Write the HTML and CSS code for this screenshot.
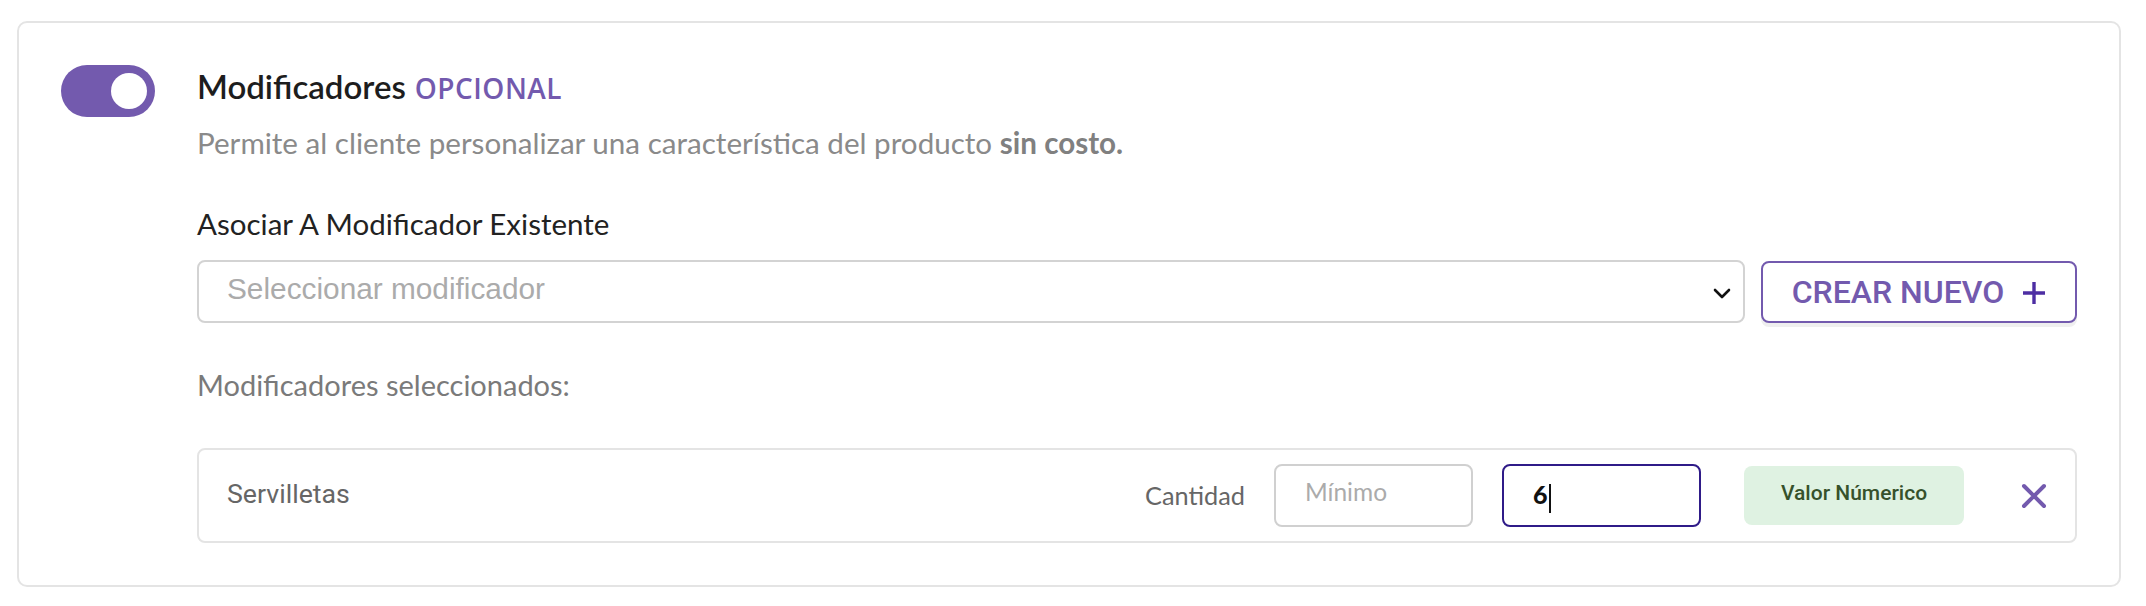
FILE: index.html
```html
<!DOCTYPE html>
<html lang="es">
<head>
<meta charset="utf-8">
<title>Modificadores</title>
<link rel="stylesheet" href="styles.css">
</head>
<body>
<div class="page">
  <section class="card">
    <div class="toggle" role="switch" aria-checked="true"><span class="knob"></span></div>
    <div class="content">
      <h2 class="title">Modificadores<span class="optional">OPCIONAL</span></h2>
      <p class="desc">Permite al cliente personalizar una característica del producto <b>sin costo.</b></p>
      <p class="label">Asociar A Modificador Existente</p>
      <div class="select-row">
        <div class="select">
          <span class="placeholder">Seleccionar modificador</span>
          <svg class="chevron" width="18" height="11" viewBox="0 0 18 11" aria-hidden="true"><path d="M2 2l7 7 7-7" fill="none" stroke="#111" stroke-width="2.6" stroke-linecap="round" stroke-linejoin="round"/></svg>
        </div>
        <button class="btn" type="button">
          <span>CREAR NUEVO</span>
          <svg class="plus" width="24" height="24" viewBox="0 0 24 24" aria-hidden="true"><path d="M12 1v22M1 12h22" fill="none" stroke="#4d2ea3" stroke-width="3.4"/></svg>
        </button>
      </div>
      <p class="selected-label">Modificadores seleccionados:</p>
      <div class="item">
        <span class="item-name">Servilletas</span>
        <span class="qty-label">Cantidad</span>
        <div class="field"><span class="ph">Mínimo</span></div>
        <div class="field active"><span class="val">6</span><span class="caret"></span></div>
        <span class="badge">Valor Númerico</span>
        <svg class="remove" width="26" height="26" viewBox="0 0 26 26" aria-hidden="true"><path d="M3 3l20 20M23 3L3 23" fill="none" stroke="#735aae" stroke-width="4" stroke-linecap="round"/></svg>
      </div>
    </div>
  </section>
</div>
</body>
</html>
```
FILE: styles.css
```css
html, body {
  margin: 0;
  background: #ffffff;
}
.page {
  padding: 21px 25px 19px 17px;
}
.card {
  border: 2px solid #e4e4e4;
  border-radius: 10px;
  padding: 42px;
  display: flex;
  align-items: flex-start;
  gap: 42px;
}
.toggle {
  flex: none;
  width: 94px;
  height: 52px;
  box-sizing: border-box;
  padding: 8px;
  border-radius: 26px;
  background: #735aae;
  display: flex;
  justify-content: flex-end;
}
.knob {
  width: 36px;
  height: 36px;
  border-radius: 50%;
  background: #ffffff;
}
.content {
  flex: 1;
  min-width: 0;
}
.title {
  margin: 0;
  height: 42px;
  font: 600 33px/42px "Lato", sans-serif;
  color: #1d1d1d;
  white-space: nowrap;
}
.optional {
  margin-left: 9px;
  font: 600 28px "Open Sans", sans-serif;
  letter-spacing: 0.5px;
  color: #735aae;
}
.desc {
  margin: 16px 0 0;
  font: 400 29.6px/40px "Lato", sans-serif;
  color: #8a8a8a;
  white-space: nowrap;
}
.desc b {
  font-weight: 700;
  color: #808080;
}
.label {
  margin: 41px 0 0;
  font: 400 29.5px/40px "Lato", sans-serif;
  color: #222222;
}
.select-row {
  display: flex;
  gap: 16px;
  height: 63px;
  margin-top: 16px;
}
.select {
  flex: 1;
  box-sizing: border-box;
  border: 2px solid #d3d3d3;
  border-radius: 8px;
  display: flex;
  align-items: center;
  justify-content: space-between;
  padding: 0 12px 0 28px;
}
.placeholder {
  margin-bottom: 6px;
  font: 400 29.8px/1 "Liberation Sans", Arial, sans-serif;
  color: #ababab;
}
.chevron {
  margin-top: 3px;
}
.btn {
  flex: none;
  width: 316px;
  box-sizing: border-box;
  margin: 1px 0 0;
  padding: 0;
  border: 2px solid #735aae;
  border-radius: 8px;
  background: #ffffff;
  box-shadow: 0 4px 0 #efefef;
  display: flex;
  align-items: center;
  justify-content: center;
  gap: 18px;
  font: 500 32px/1 "Roboto", sans-serif;
  color: #735aae;
}
.plus {
  margin-top: 2px;
}
.selected-label {
  margin: 42px 0 0;
  font: 400 29px/40px "Lato", sans-serif;
  color: #7a7a7a;
}
.item {
  margin-top: 43px;
  height: 95px;
  box-sizing: border-box;
  border: 2px solid #e4e4e4;
  border-radius: 8px;
  padding: 0 28px;
  display: flex;
  align-items: center;
}
.item-name {
  flex: 1;
  margin-bottom: 2px;
  font: 400 26.7px/1 "Roboto", sans-serif;
  color: #666666;
}
.qty-label {
  margin-right: 29px;
  font: 400 25.3px/1 "Lato", sans-serif;
  color: #666666;
}
.field {
  width: 199px;
  height: 63px;
  box-sizing: border-box;
  border: 2px solid #d0d0d0;
  border-radius: 8px;
  padding-left: 29px;
  display: flex;
  align-items: center;
}
.ph {
  margin-bottom: 6px;
  font: 400 24.5px/1 "Lato", sans-serif;
  color: #ababab;
}
.field.active {
  margin-left: 29px;
  border-color: #2f1b88;
}
.val {
  margin-bottom: 2px;
  font: 900 25px/1 "Lato", sans-serif;
  color: #111111;
}
.caret {
  width: 2px;
  height: 29px;
  margin: 5px 0 0 1px;
  background: #111111;
}
.badge {
  width: 220px;
  height: 59px;
  box-sizing: border-box;
  margin-left: 43px;
  padding-bottom: 4px;
  border-radius: 8px;
  background: #dff2e2;
  display: flex;
  align-items: center;
  justify-content: center;
  font: 500 21px/1 "Roboto", sans-serif;
  color: #36512b;
}
.remove {
  flex: none;
  margin-left: 57px;
}
```
